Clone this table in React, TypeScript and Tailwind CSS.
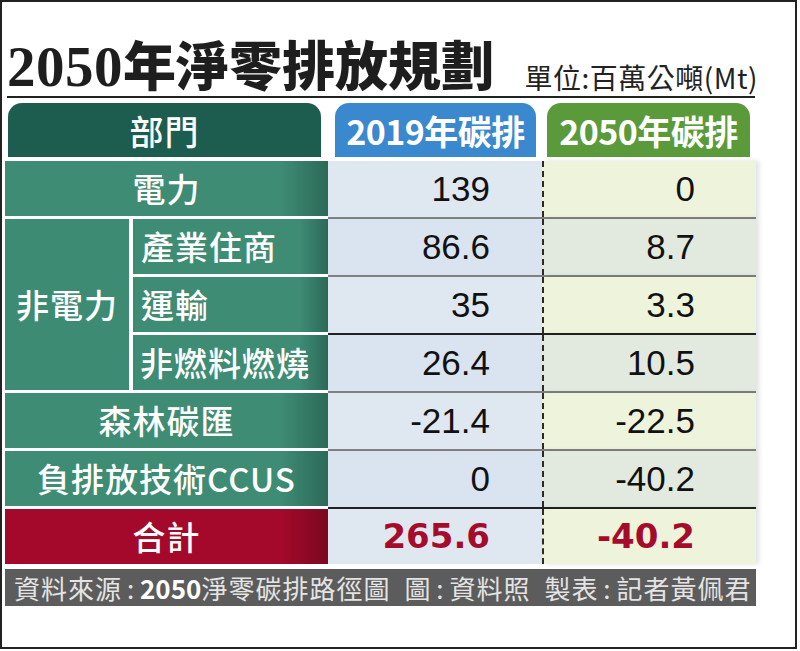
const cjk = "font-['Noto_Sans_CJK_TC',sans-serif]";
const num = "font-['Liberation_Sans','Noto_Sans_CJK_TC',sans-serif]";

type Row = { blue: string; green: string; line: string; total?: boolean };

const BLUE_BG = ['bg-[#dfe7f1]', 'bg-[#d9e4f0]'];
const GREEN_BG = ['bg-[#eef3dc]', 'bg-[#e2eadf]'];

const ROWS: Row[] = [
  { blue: '139', green: '0', line: 'border-b-[#808080]' },
  { blue: '86.6', green: '8.7', line: 'border-b-[#808080]' },
  { blue: '35', green: '3.3', line: 'border-b-[#222]' },
  { blue: '26.4', green: '10.5', line: 'border-b-[#808080]' },
  { blue: '-21.4', green: '-22.5', line: 'border-b-[#808080]' },
  { blue: '0', green: '-40.2', line: 'border-b-[#222]' },
  { blue: '265.6', green: '-40.2', line: 'border-b-transparent', total: true },
];

const labelCell =
  `h-[55px] self-start flex items-center text-white text-[33px] font-medium tracking-[1px] ${cjk}`;
const greenLabel = 'bg-linear-to-r from-[#3f8c74] from-85% to-[#2c6a57]';

function DataCells({ row, i }: { row: Row; i: number }) {
  const text = row.total
    ? "font-['DejaVu_Sans',sans-serif] font-bold text-[34px] text-[#a50c2b]"
    : `${num} text-[35px] text-[#111]`;
  return (
    <>
      <div
        className={`${BLUE_BG[i % 2]} ${row.total ? 'h-[55px] self-start' : 'h-full border-b-2'} ${row.line} flex items-center justify-end pr-[52px] ${text}`}
      >
        {row.blue}
      </div>
      <div
        className={`${GREEN_BG[i % 2]} ${row.total ? 'h-[55px] self-start' : 'h-full border-b-2'} ${row.line} flex shadow-[3px_0_5px_rgba(0,0,0,0.12)]`}
      >
        <div
          className={`flex-1 border-l-2 border-dashed border-[#2a2a2a] flex items-center justify-end pr-[61px] ${text}`}
        >
          {row.green}
        </div>
      </div>
    </>
  );
}

function Colon() {
  return <span className="inline-block w-[18px] text-center">:</span>;
}

export default function App() {
  return (
    <div className="w-[800px] h-[651px] bg-white">
      <div className="w-[797px] h-[649px] border-2 border-[#222] flex flex-col">
        {/* title */}
        <div className="h-[94px] flex items-end justify-between pl-[5px] pr-[37px]">
          <h1
            className="text-[53px] leading-none font-black text-[#1e1e1e] font-['Liberation_Serif','Noto_Sans_CJK_TC',serif] mb-[1px]"
          >
            <span className="text-[57px] tracking-[0.5px]">2050</span>年淨零排放規劃
          </h1>
          <p className={`text-[28px] leading-none tracking-[0.5px] text-[#222] mb-[5px] ${cjk}`}>
            單位:百萬公噸(Mt)
          </p>
        </div>
        <div className="ml-[5px] w-[748px] h-[2px] bg-[#222]" />

        {/* header */}
        <div className={`mt-[5px] h-[54px] flex text-white text-[34px] font-bold ${cjk}`}>
          <div className="ml-[6px] w-[313px] rounded-t-[14px] bg-[#1d5d4f] flex items-center justify-center font-medium tracking-[1px]">
            部門
          </div>
          <div className="ml-[14px] w-[201px] rounded-t-[14px] bg-[#3a88cd] flex items-center justify-center tracking-[-0.5px]">
            2019年碳排
          </div>
          <div className="ml-[11px] w-[203px] rounded-t-[14px] bg-[#5a9a3b] flex items-center justify-center tracking-[-0.5px]">
            2050年碳排
          </div>
        </div>

        {/* body */}
        <div className="ml-[3px] mt-[4px] grid grid-cols-[124px_4px_195px_214px_214px] grid-rows-[repeat(7,58px)]">
          <div className={`col-span-3 justify-center ${labelCell} ${greenLabel}`}>電力</div>
          <DataCells row={ROWS[0]} i={0} />

          <div className={`row-span-3 h-[171px] self-start flex items-center justify-center bg-[#3e8b73] text-white text-[33px] font-medium tracking-[1px] ${cjk}`}>
            非電力
          </div>
          <div className="row-span-3" />
          <div className={`pl-[8px] ${labelCell} ${greenLabel}`}>產業住商</div>
          <DataCells row={ROWS[1]} i={1} />
          <div className={`pl-[8px] ${labelCell} ${greenLabel}`}>運輸</div>
          <DataCells row={ROWS[2]} i={2} />
          <div className={`pl-[7px] ${labelCell} ${greenLabel}`}>非燃料燃燒</div>
          <DataCells row={ROWS[3]} i={3} />

          <div className={`col-span-3 justify-center ${labelCell} ${greenLabel}`}>森林碳匯</div>
          <DataCells row={ROWS[4]} i={4} />
          <div className={`col-span-3 justify-center ${labelCell} ${greenLabel}`}>負排放技術CCUS</div>
          <DataCells row={ROWS[5]} i={5} />
          <div className={`col-span-3 justify-center ${labelCell} bg-linear-to-r from-[#a4092b] from-85% to-[#7c0820]`}>
            合計
          </div>
          <DataCells row={ROWS[6]} i={6} />
        </div>

        {/* footer */}
        <div className={`ml-[3px] mt-[2px] w-[751px] h-[37px] bg-[#5c5c5c] flex items-center pl-[9px] text-[26px] leading-none tracking-[1px] text-[#e4e4e4] whitespace-nowrap ${cjk}`}>
          資料來源<Colon /><span className="font-bold text-white tracking-normal">2050</span>淨零碳排路徑圖
          <span className="inline-block w-[14px]" />圖<Colon />資料照
          <span className="inline-block w-[14px]" />製表<Colon />記者黃佩君
        </div>
      </div>
    </div>
  );
}
